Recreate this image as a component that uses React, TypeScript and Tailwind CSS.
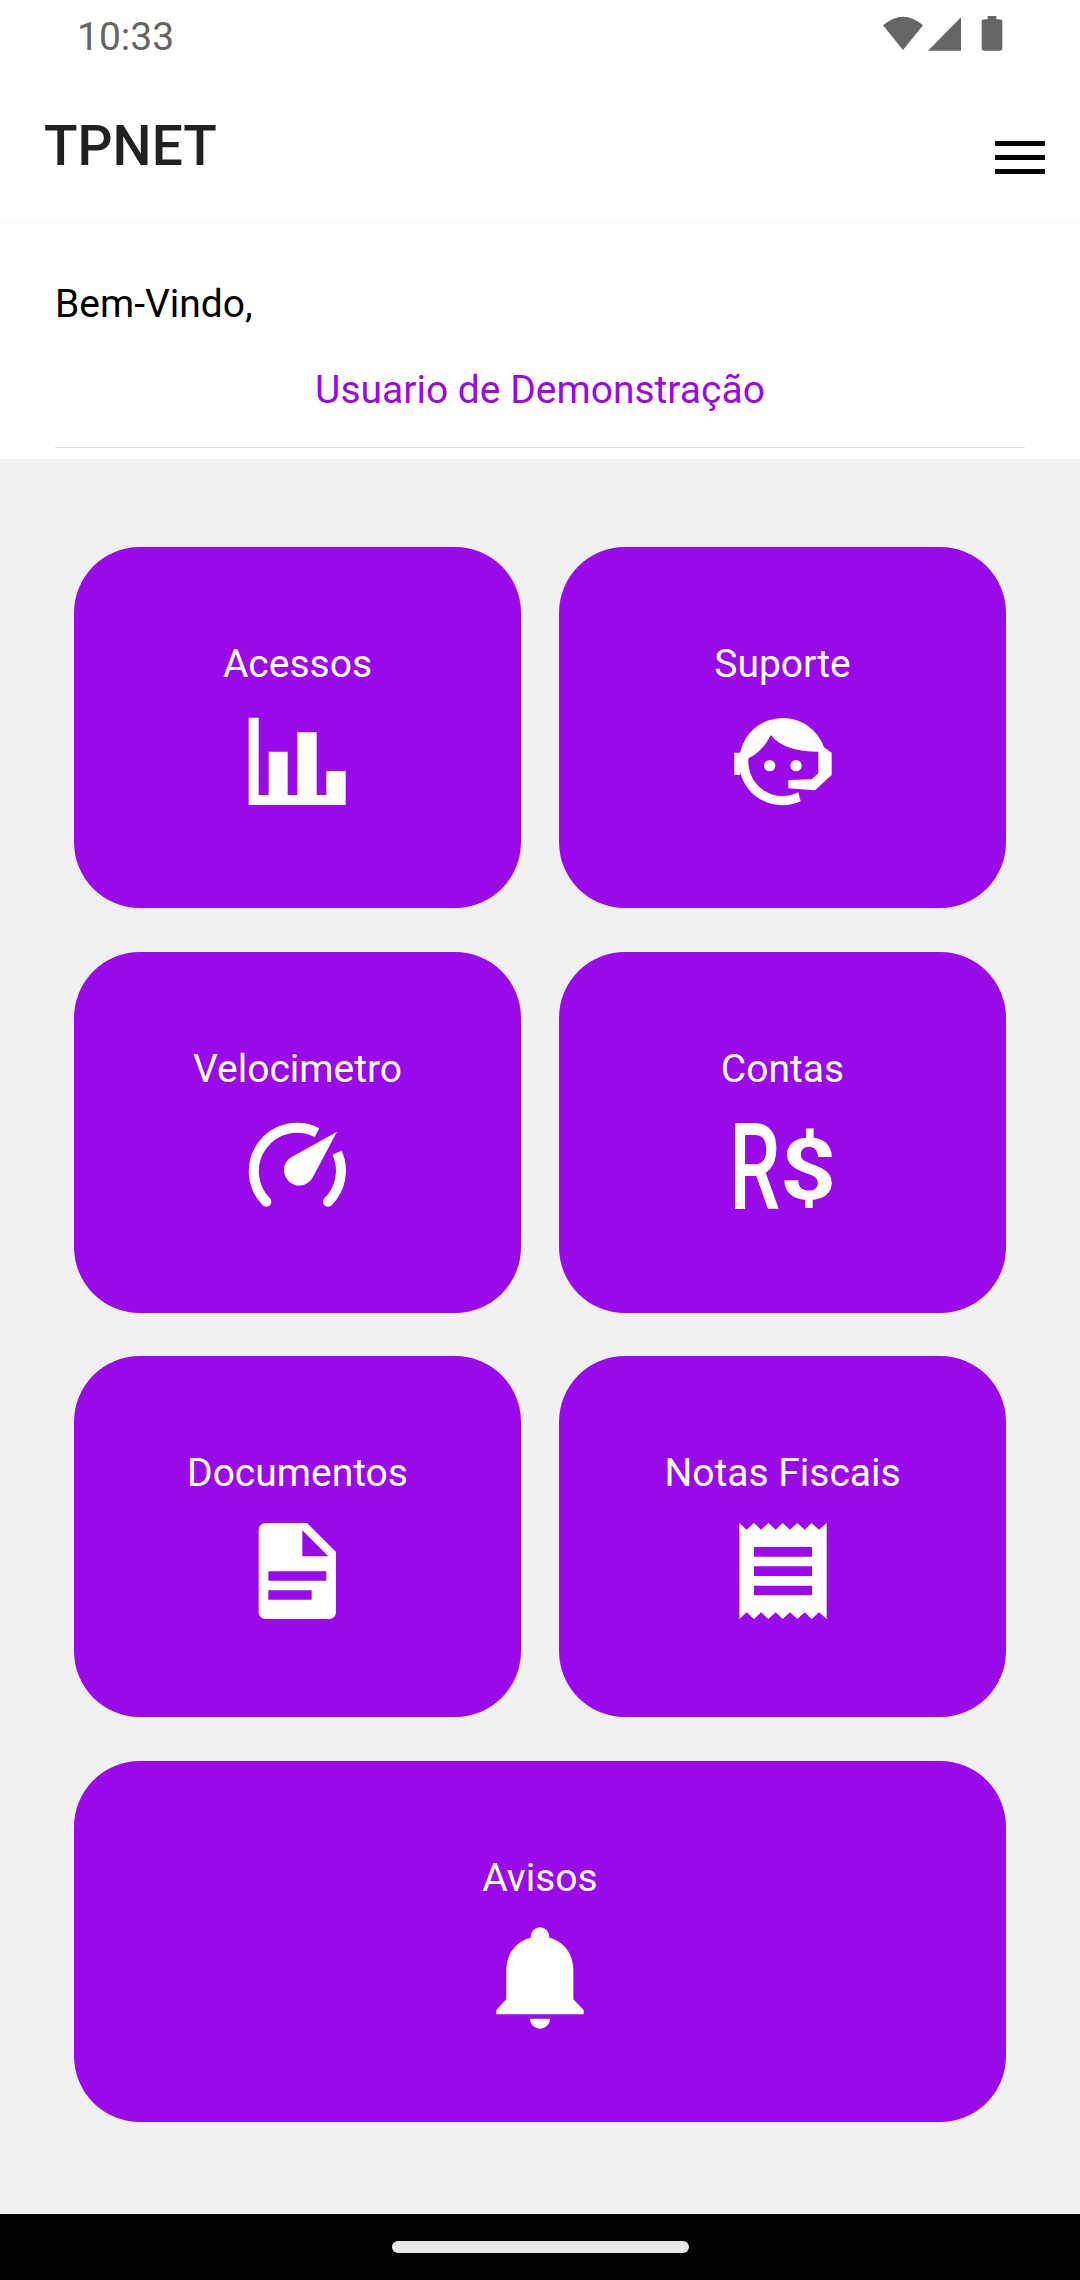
import type { ReactNode } from 'react';

function IconBars() {
  return (
    <svg width="100" height="100" viewBox="143 90 300 300" fill="#fff">
      <path d="M145 113H175V345H205V215H262V345H291V157H349V345H378V273H436V375H145Z" />
    </svg>
  );
}

function IconSupport() {
  return (
    <svg width="100" height="100" viewBox="159 90 300 300" fill="#fff">
      <path d="M308 114A131 131 0 0 1 432 202L455 218V285L405 331L325 325V300L395 298L415 280V215C350 215 300 200 272 165C258 195 235 222 205 235V245A103 103 0 0 0 355 337L362 364A131 131 0 0 1 180 275V285H163V218H180A131 131 0 0 1 308 114Z" />
      <circle cx="269" cy="257" r="17" />
      <circle cx="348" cy="257" r="17" />
    </svg>
  );
}

function IconGauge() {
  return (
    <svg width="100" height="100" viewBox="143 45 300 300" fill="#fff">
      <path d="M198 305A130 130 0 0 1 350 98" fill="none" stroke="#fff" strokeWidth="30" />
      <path d="M410 158A130 130 0 0 1 383 305" fill="none" stroke="#fff" strokeWidth="30" />
      <circle cx="198" cy="305" r="15" />
      <circle cx="383" cy="305" r="15" />
      <path d="M410 95L270 173A46 46 0 1 0 335 236Z" />
    </svg>
  );
}

function IconCurrency() {
  return (
    <svg width="100" height="100" viewBox="159 45 300 300" fill="#fff" className="overflow-visible">
      <text transform="translate(148 328) scale(0.67 1)" fontSize="363" fontWeight="500">
        R
      </text>
      <text transform="translate(300 297) scale(1.14 1)" fontSize="258" fontWeight="700">
        $
      </text>
    </svg>
  );
}

function IconDocument() {
  return (
    <svg width="100" height="100" viewBox="143 58 300 300" fill="#fff">
      <path
        fillRule="evenodd"
        d="M195 70H320L407 157V338A20 20 0 0 1 387 358H195A20 20 0 0 1 175 338V90A20 20 0 0 1 195 70ZM306 92V170H384ZM204 215V243H378V215ZM204 272V300H334V272Z"
      />
    </svg>
  );
}

function IconReceipt() {
  return (
    <svg width="100" height="100" viewBox="159 58 300 300" fill="#fff">
      <path
        fillRule="evenodd"
        d="M178 70L200 90L222 70L243 90L265 70L287 90L308 70L330 90L352 70L374 90L395 70L417 90L440 70V358L417 338L395 358L374 338L352 358L330 338L308 358L287 338L265 358L243 338L222 358L200 338L178 358ZM222 142V171H396V142ZM222 200V229H396V200ZM222 258V287H396V258Z"
      />
    </svg>
  );
}

function IconBell() {
  return (
    <svg width="100" height="100" viewBox="150 72 300 300" fill="#fff" className="overflow-visible">
      <path d="M300 82A29 29 0 0 1 328 113C375 125 400 165 400 210V298L431 330V343H169V330L199 298V210C199 165 225 125 272 113A29 29 0 0 1 300 82Z" />
      <path d="M270 356H330A30 30 0 0 1 270 356Z" />
    </svg>
  );
}

function Card({ label, icon, wide }: { label: string; icon: ReactNode; wide?: boolean }) {
  return (
    <div
      className={`flex h-[361px] flex-col items-center rounded-[66px] bg-[#9a09e9] pt-[95px] ${
        wide ? 'col-span-2' : ''
      }`}
    >
      <span className="text-[39px] leading-[45px] text-white">{label}</span>
      <div className="mt-[23px]">{icon}</div>
    </div>
  );
}

export default function App() {
  const cards = [
    { label: 'Acessos', icon: <IconBars /> },
    { label: 'Suporte', icon: <IconSupport /> },
    { label: 'Velocimetro', icon: <IconGauge /> },
    { label: 'Contas', icon: <IconCurrency /> },
    { label: 'Documentos', icon: <IconDocument /> },
    { label: 'Notas Fiscais', icon: <IconReceipt /> },
  ];

  return (
    <div className="flex h-[2280px] w-[1080px] flex-col overflow-hidden bg-white font-['Roboto',sans-serif]">
      {/* Status bar */}
      <div className="flex h-[66px] shrink-0 items-center justify-between pr-[77px] pl-[77px]">
        <span className="mt-[7px] text-[39px] leading-[44px] text-[#666666]">10:33</span>
        <svg width="120" height="35" viewBox="70 50 360 105" fill="#666666">
          <path d="M70 78Q130 26 190 78L130 152Z" />
          <path d="M304 54V154H205Z" />
          <path d="M384 60V50H410V60H420Q428 60 428 68V146Q428 154 420 154H374Q366 154 366 146V68Q366 60 374 60Z" />
        </svg>
      </div>

      {/* Header */}
      <div className="relative flex h-[154px] shrink-0 items-start justify-between pr-[35px] pl-[44px] shadow-[0_5px_5px_rgba(0,0,0,0.012)]">
        <h1 className="mt-[48px] text-[55px] leading-[65px] font-medium text-[#212121]">TPNET</h1>
        <div className="mt-[75px] flex h-[33px] w-[50px] flex-col justify-between">
          <div className="h-[5px] bg-black" />
          <div className="h-[5px] bg-black" />
          <div className="h-[5px] bg-black" />
        </div>
      </div>

      {/* Welcome */}
      <div className="flex h-[239px] shrink-0 flex-col px-[55px] pt-[62px]">
        <p className="text-[39px] leading-[45px] text-black">Bem-Vindo,</p>
        <p className="mt-[41px] text-center text-[39px] leading-[45px] text-[#9a09e9]">
          Usuario de Demonstração
        </p>
        <div className="mt-[34px] h-px bg-[#e0e0e0]" />
      </div>

      {/* Menu */}
      <div className="grid flex-1 grid-cols-2 content-start gap-x-[38px] gap-y-[43.5px] bg-[#f1f1f2] px-[74px] pt-[88px]">
        {cards.map((card) => (
          <Card key={card.label} label={card.label} icon={card.icon} />
        ))}
        <Card label="Avisos" icon={<IconBell />} wide />
      </div>

      {/* Navigation bar */}
      <div className="flex h-[66px] shrink-0 items-start justify-center bg-black pt-[27px]">
        <div className="h-[12px] w-[297px] rounded-full bg-[#e8e8e8]" />
      </div>
    </div>
  );
}
